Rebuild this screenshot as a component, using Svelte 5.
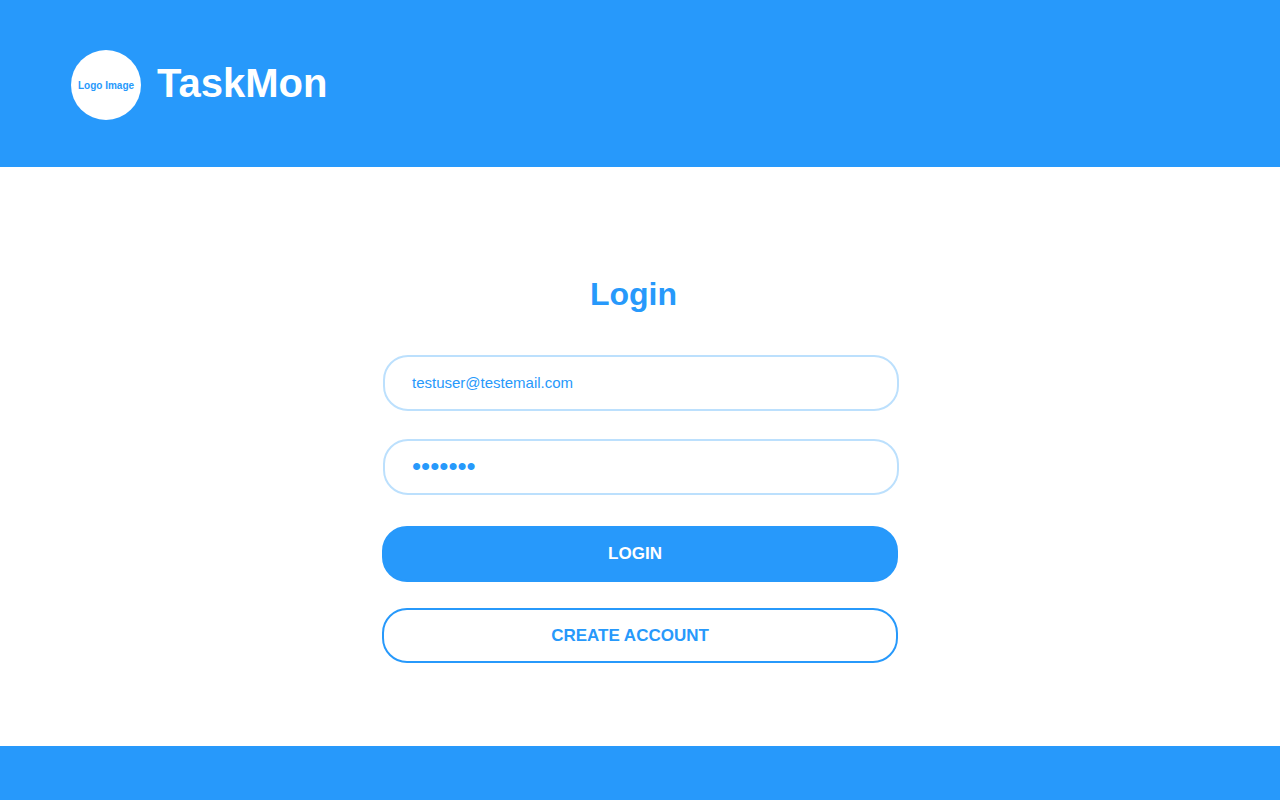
<script>
  let email = $state('testuser@testemail.com');
  let password = $state('secret1');
</script>

<div class="page">
  <header>
    <div class="logo">Logo Image</div>
    <span class="brand">TaskMon</span>
  </header>

  <main>
    <form onsubmit={(e) => e.preventDefault()}>
      <h1>Login</h1>
      <div class="fields">
        <input type="email" aria-label="Email" bind:value={email} />
        <input type="password" aria-label="Password" bind:value={password} />
      </div>
      <div class="actions">
        <button class="primary" type="submit">LOGIN</button>
        <button class="secondary" type="button">CREATE ACCOUNT</button>
      </div>
    </form>
  </main>

  <footer></footer>
</div>

<style>
  :global(body) {
    margin: 0;
    background: #fff;
  }

  .page {
    --blue: #2799fb;
    display: flex;
    flex-direction: column;
    min-height: 100vh;
    color: var(--blue);
    font-family: "Liberation Sans", Arial, sans-serif;
  }

  header {
    display: flex;
    gap: 16px;
    padding: 50px 71px 47px;
    background: var(--blue);
  }

  .logo {
    display: grid;
    place-items: center;
    width: 70px;
    height: 70px;
    border-radius: 50%;
    background: #fff;
    font-size: 10px;
    font-weight: bold;
    white-space: nowrap;
  }

  .brand {
    color: #fff;
    font-size: 40px;
    font-weight: bold;
    line-height: 66px;
  }

  main {
    flex: 1;
    padding: 108px 24px 83px;
  }

  form {
    max-width: 518px;
    margin: 0 auto;
  }

  h1 {
    margin: 0 0 42px;
    padding-right: 13px;
    font-size: 32px;
    line-height: 38px;
    text-align: center;
  }

  .fields,
  .actions {
    display: grid;
  }

  .fields {
    gap: 28px;
    padding-left: 2px;
  }

  .actions {
    gap: 26px;
    padding: 31px 1px 0;
  }

  input,
  button {
    box-sizing: border-box;
    width: 100%;
    height: 56px;
    border: 2px solid var(--blue);
    border-radius: 25px;
    font-family: inherit;
  }

  input {
    padding: 0 27px 2px;
    border-color: #bce0fd;
    background: #fff;
    color: var(--blue);
    font-size: 15px;
    outline: none;
  }

  input[type="password"] {
    font-size: 26px;
  }

  button {
    font-size: 17px;
    font-weight: bold;
    cursor: pointer;
  }

  .primary {
    padding: 0 10px 0 0;
    background: var(--blue);
    color: #fff;
  }

  .secondary {
    height: 55px;
    padding: 0 20px 0 0;
    background: #fff;
    color: var(--blue);
  }

  footer {
    height: 54px;
    background: var(--blue);
  }
</style>
